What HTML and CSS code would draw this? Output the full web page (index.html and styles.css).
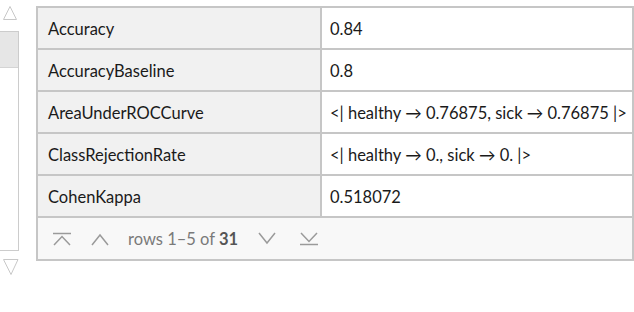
FILE: index.html
```html
<!DOCTYPE html>
<html>
<head>
<meta charset="utf-8">
<link rel="stylesheet" href="styles.css">
</head>
<body>
<div class="page">
  <div class="scroll">
    <svg class="tri up" width="19" height="18" viewBox="0 0 19 18"><path d="M3.5 16.5 L10 3.5 L16.5 16.5 Z" fill="none" stroke="#c8c8c8" stroke-width="1"/></svg>
    <div class="track"><div class="thumb"></div></div>
    <svg class="tri down" width="19" height="18" viewBox="0 0 19 18"><path d="M3.5 1.5 L11 16.5 L18 1.5 Z" fill="none" stroke="#c8c8c8" stroke-width="1"/></svg>
  </div>
  <div class="table">
    <div class="row"><div class="key">Accuracy</div><div class="val">0.84</div></div>
    <div class="row"><div class="key">AccuracyBaseline</div><div class="val">0.8</div></div>
    <div class="row"><div class="key">AreaUnderROCCurve</div><div class="val">&lt;| healthy → 0.76875, sick → 0.76875 |&gt;</div></div>
    <div class="row"><div class="key">ClassRejectionRate</div><div class="val">&lt;| healthy → 0., sick → 0. |&gt;</div></div>
    <div class="row"><div class="key">CohenKappa</div><div class="val">0.518072</div></div>
    <div class="footer">
      <svg class="ic first" width="20" height="14" viewBox="0 0 20 14"><path d="M1 1.5 H19 M2 13 L10 4.5 L18 13" fill="none" stroke="#9a9a9a" stroke-width="1.5"/></svg>
      <svg class="ic" width="20" height="14" viewBox="0 0 20 14"><path d="M2 13 L10 3 L18 13" fill="none" stroke="#9a9a9a" stroke-width="1.5"/></svg>
      <span class="label">rows 1–5 of <b>31</b></span>
      <svg class="ic next" width="20" height="14" viewBox="0 0 20 14"><path d="M2 1 L10 11 L18 1" fill="none" stroke="#9a9a9a" stroke-width="1.5"/></svg>
      <svg class="ic" width="20" height="14" viewBox="0 0 20 14"><path d="M2 1 L10 9.5 L18 1 M1 12.5 H19" fill="none" stroke="#9a9a9a" stroke-width="1.5"/></svg>
    </div>
  </div>
</div>
</body>
</html>
```
FILE: styles.css
```css
html, body {
  margin: 0;
  padding: 0;
  background: #ffffff;
}
body {
  font-family: Lato, "Open Sans", "Liberation Sans", sans-serif;
  font-size: 16.5px;
  color: #1a1a1a;
}
.page {
  display: flex;
  align-items: flex-start;
}
.scroll {
  width: 19px;
  display: flex;
  flex-direction: column;
}
.tri { display: block; }
.tri.up { margin-top: 3px; }
.track {
  margin-top: 10px;
  height: 218px;
  border: 1px solid #cccccc;
  border-left: none;
  background: #ffffff;
}
.thumb {
  height: 35px;
  background: #e6e6e6;
  border-bottom: 1px solid #d4d4d4;
}
.tri.down { margin-top: 7px; }
.table {
  margin-left: 17px;
  margin-top: 6px;
  width: 594px;
  border: 2px solid #c6c6c6;
}
.row {
  display: grid;
  grid-template-columns: 284px 1fr;
  height: 40px;
  border-bottom: 2px solid #c6c6c6;
}
.key {
  background: #f1f1f1;
  border-right: 2px solid #c6c6c6;
  padding-left: 10px;
  padding-top: 2px;
  display: flex;
  align-items: center;
}
.val {
  background: #ffffff;
  padding-left: 8px;
  padding-top: 2px;
  display: flex;
  align-items: center;
}
.footer {
  height: 41px;
  background: #f8f8f8;
  display: flex;
  align-items: center;
  padding-left: 14px;
}
.ic { display: block; margin-right: 18px; }
.ic.next { margin-right: 22px; }
.label {
  color: #7a7a7a;
  margin-right: 19px;
}
.label b { color: #555555; }
```
